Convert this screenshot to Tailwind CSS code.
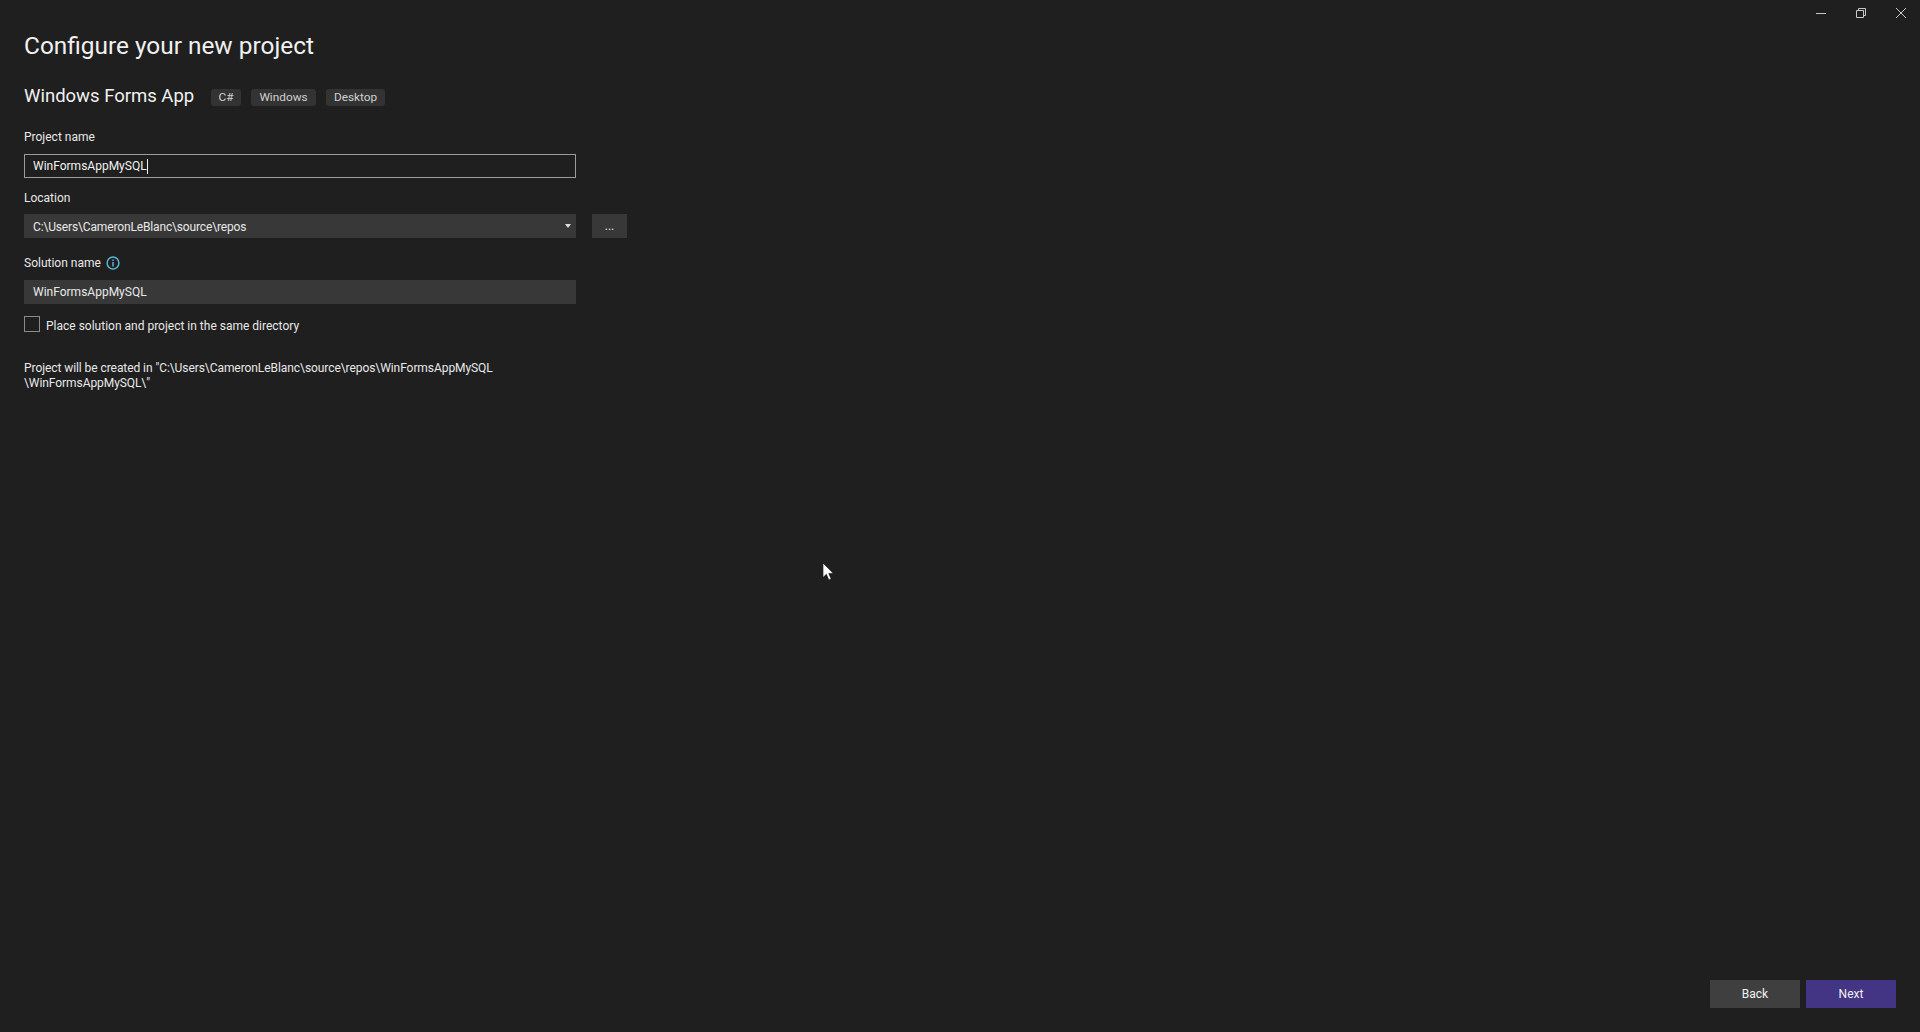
<!DOCTYPE html>
<html lang="en">
<head>
    <meta charset="UTF-8">
    <title>Configure your new project</title>
    <script src="https://cdn.jsdelivr.net/npm/@tailwindcss/browser@4"></script>
</head>
<body class="bg-[#1f1f1f] overflow-hidden font-['Roboto',sans-serif]">
    <div class="relative h-[1032px] flex flex-col text-[#e8e8e8]">

        <!-- window controls -->
        <div class="flex justify-end items-center h-[26px] pr-[14px] gap-[30px] text-[#c8c8c8]">
            <svg class="w-[10px] h-[10px]" viewBox="0 0 10 10" fill="none" stroke="currentColor"><path d="M0 5.5h10" /></svg>
            <svg class="w-[10px] h-[10px]" viewBox="0 0 10 10" fill="none" stroke="currentColor"><path d="M.5 2.5h7v7h-7z M2.5 2.5v-2h7v7h-2" /></svg>
            <svg class="w-[10px] h-[10px]" viewBox="0 0 10 10" fill="none" stroke="currentColor"><path d="M0 0l10 10M10 0L0 10" /></svg>
        </div>

        <main class="pl-6 w-[628px]">
            <h1 class="mt-[2px] text-[24.4px] leading-9 text-[#f1f1f1]">Configure your new project</h1>

            <div class="mt-[19px] flex items-center h-7">
                <h2 class="text-[18.5px] text-[#f1f1f1] w-[187px]">Windows Forms App</h2>
                <div class="flex gap-[10px] text-[11.8px] text-[#d0d0d0]">
                    <span class="w-[30px] h-[17px] leading-[17px] text-center bg-[#333333] rounded-[3px]">C#</span>
                    <span class="w-[65px] h-[17px] leading-[17px] text-center bg-[#333333] rounded-[3px]">Windows</span>
                    <span class="w-[59px] h-[17px] leading-[17px] text-center bg-[#333333] rounded-[3px]">Desktop</span>
                </div>
            </div>

            <label class="mt-[18px] block text-xs leading-4 h-[25px]">Project name</label>
            <div class="w-[552px] h-6 pl-2 flex items-center text-xs border border-[#9c9c9c] bg-[#1f1f1f] text-[#f1f1f1]">
                WinFormsAppMySQL<span class="w-px h-[15px] bg-[#f1f1f1]"></span>
            </div>

            <label class="mt-[12px] block text-xs leading-4 h-[24px]">Location</label>
            <div class="flex gap-4">
                <div class="w-[552px] h-6 pl-[9px] pr-[5px] flex items-center justify-between text-xs bg-[#383838]">
                    <span class="pt-px tracking-[-0.15px]">C:\Users\CameronLeBlanc\source\repos</span>
                    <svg class="w-[6px] h-[4px]" viewBox="0 0 6 4" fill="#dddddd"><path d="M0 0h6L3 4z" /></svg>
                </div>
                <div class="w-[35px] h-6 flex items-center justify-center text-xs bg-[#383838]">...</div>
            </div>

            <div class="mt-[17px] flex items-center gap-[5px] h-4 text-xs">
                <span>Solution name</span>
                <svg class="w-[14px] h-[14px] text-[#58b4d8]" viewBox="0 0 14 14" fill="none" stroke="currentColor" stroke-width="1.5">
                    <circle cx="7" cy="7" r="5.9" />
                    <path d="M7 6v4.5M7 3.4v1.5" />
                </svg>
            </div>
            <div class="mt-[9px] w-[552px] h-6 px-[9px] flex items-center text-xs bg-[#383838]">WinFormsAppMySQL</div>

            <div class="mt-[12px] flex items-center gap-[6px] h-4 text-xs">
                <span class="w-4 h-4 border border-[#8a8a8a]"></span>
                <span class="pt-[4px]">Place solution and project in the same directory</span>
            </div>

            <p class="mt-[29px] w-[500px] text-xs leading-[15px] tracking-[-0.07px]">Project will be created in "C:\Users\CameronLeBlanc\source\repos\WinFormsAppMySQL<br>\WinFormsAppMySQL\"</p>
        </main>

        <footer class="mt-auto pb-6 pr-6 flex justify-end gap-[6px] text-xs">
            <button class="w-[90px] h-7 bg-[#3f3f3f] text-[#f1f1f1]">Back</button>
            <button class="w-[90px] h-7 bg-[#433484] text-[#f1f1f1]">Next</button>
        </footer>

        <!-- mouse pointer -->
        <svg class="absolute left-[823px] top-[563px] w-[11px] h-[18px]" viewBox="0 0 11 18">
            <path d="M0 0v14.5l3.4-3.2 2.4 5.7 2.4-1-2.4-5.6h4.7z" fill="#ffffff" stroke="#000000" stroke-width=".6" />
        </svg>
    </div>
</body>
</html>
